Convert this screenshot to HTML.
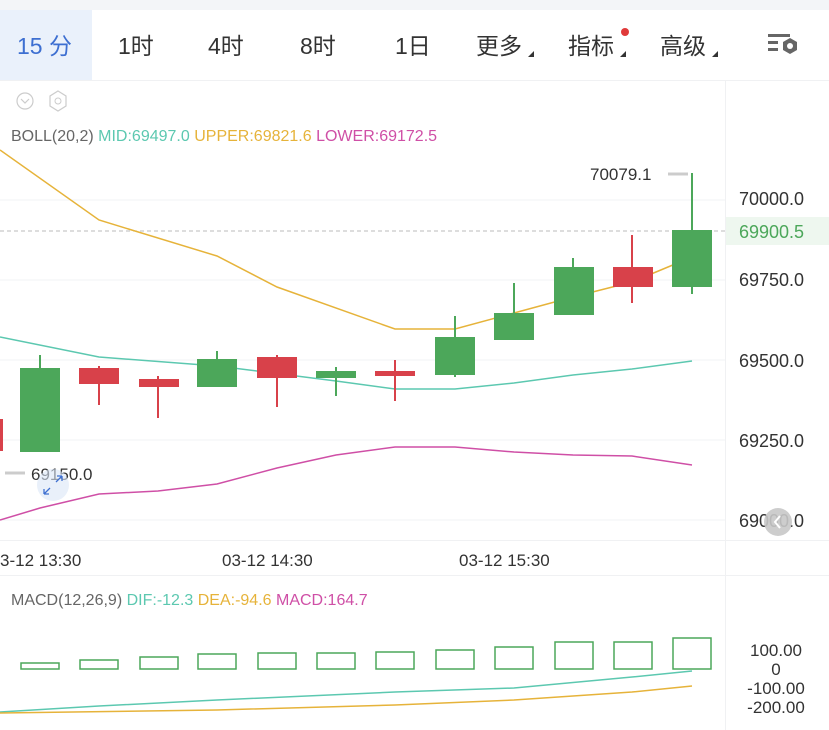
<!DOCTYPE html>
<html><head><meta charset="utf-8"><style>
html,body{margin:0;padding:0;width:829px;height:730px;overflow:hidden;background:#fff;font-family:"Liberation Sans","Noto Sans CJK SC",sans-serif}
svg{display:block}
</style></head><body>
<svg width="829" height="730" viewBox="0 0 829 730" xmlns="http://www.w3.org/2000/svg" font-family="Liberation Sans, Noto Sans CJK SC, sans-serif">
<rect x="0" y="0" width="829" height="10" fill="#f3f5f8"/>
<rect x="0" y="10" width="92" height="70" fill="#eaf1fb"/>
<line x1="0" y1="80.5" x2="829" y2="80.5" stroke="#f0f1f3"/>
<g font-size="23" fill="#333">
<text x="17" y="54" fill="#3d6fd1">15 分</text>
<text x="118" y="54">1时</text>
<text x="208" y="54">4时</text>
<text x="300" y="54">8时</text>
<text x="395" y="54">1日</text>
<text x="476" y="54">更多</text>
<text x="568" y="54">指标</text>
<text x="660" y="54">高级</text>
</g>
<g fill="#333"><path d="M528 57 L534 57 L534 51 Z"/><path d="M620 57 L626 57 L626 51 Z"/><path d="M712 57 L718 57 L718 51 Z"/></g>
<circle cx="625" cy="32" r="4" fill="#e03a3a"/>
<g fill="#666"><rect x="768" y="34" width="22" height="3"/><rect x="768" y="41" width="10" height="3"/><rect x="768" y="48" width="10" height="3"/>
<path d="M790 38 L797 42 L797 50 L790 54 L783 50 L783 42 Z"/></g><circle cx="790" cy="46" r="3" fill="#fff"/>
<line x1="725.5" y1="80" x2="725.5" y2="730" stroke="#f0f1f3"/>
<circle cx="25" cy="101" r="8" fill="none" stroke="#ccc" stroke-width="1.2"/><path d="M21 99 L25 103 L29 99" fill="none" stroke="#ccc" stroke-width="1.2"/>
<path d="M58 91 L66 96 L66 106 L58 111 L50 106 L50 96 Z" fill="none" stroke="#ccc" stroke-width="1.2"/><circle cx="58" cy="101" r="3" fill="none" stroke="#ccc"/>
<text x="11" y="141" font-size="16" fill="#666">BOLL(20,2) <tspan fill="#5cc8b0">MID:69497.0</tspan> <tspan fill="#e6b33a">UPPER:69821.6</tspan> <tspan fill="#cf4fa6">LOWER:69172.5</tspan></text>
<g stroke="#f2f3f5"><line x1="0" y1="200" x2="725" y2="200"/><line x1="0" y1="280" x2="725" y2="280"/><line x1="0" y1="360" x2="725" y2="360"/><line x1="0" y1="440" x2="725" y2="440"/><line x1="0" y1="520" x2="725" y2="520"/></g>
<line x1="0" y1="540.5" x2="829" y2="540.5" stroke="#f0f1f3"/>
<line x1="0" y1="575.5" x2="829" y2="575.5" stroke="#f0f1f3"/>
<line x1="0" y1="231" x2="725" y2="231" stroke="#bbb" stroke-dasharray="4 3"/>
<rect x="726" y="217" width="103" height="28" fill="#eef7ef"/>
<g font-size="18" fill="#333">
<text x="739" y="205">70000.0</text>
<text x="739" y="238" fill="#4ca75a">69900.5</text>
<text x="739" y="286">69750.0</text>
<text x="739" y="367">69500.0</text>
<text x="739" y="447">69250.0</text>
<text x="739" y="527">69000.0</text>
</g>
<circle cx="778" cy="522" r="14" fill="#c8c8c8" opacity="0.9"/><path d="M780 516 L775 522 L780 528" fill="none" stroke="#fff" stroke-width="2"/>
<g stroke-width="1.5" fill="none">
<polyline stroke="#e6b33a" points="0,150 99,220 217,256 277,287 395,329 455,329 514,313 573,297 632,282 692,257"/>
<polyline stroke="#5cc8b0" points="0,337 99,357 217,366 336,381 395,389 455,389 514,383 573,375 632,369 692,361"/>
<polyline stroke="#cf4fa6" points="0,520 40,508 99,494 158,491 217,484 277,468 336,455 395,447 455,447 514,452 573,455 632,456 692,465"/>
</g>
<g stroke-width="2">
<g stroke="#4ca75a" fill="#4ca75a">
<line x1="40" y1="355" x2="40" y2="451"/><rect x="21" y="369" width="38" height="82"/>
<line x1="217" y1="351" x2="217" y2="386"/><rect x="198" y="360" width="38" height="26"/>
<line x1="336" y1="367" x2="336" y2="396"/><rect x="317" y="372" width="38" height="5"/>
<line x1="455" y1="316" x2="455" y2="377"/><rect x="436" y="338" width="38" height="36"/>
<line x1="514" y1="283" x2="514" y2="340"/><rect x="495" y="314" width="38" height="25"/>
<line x1="573" y1="258" x2="573" y2="314"/><rect x="555" y="268" width="38" height="46"/>
<line x1="692" y1="173" x2="692" y2="294"/><rect x="673" y="231" width="38" height="55"/>
</g>
<g stroke="#d8414a" fill="#d8414a">
<rect x="0" y="420" width="2" height="30"/>
<line x1="99" y1="366" x2="99" y2="405"/><rect x="80" y="369" width="38" height="14"/>
<line x1="158" y1="376" x2="158" y2="418"/><rect x="140" y="380" width="38" height="6"/>
<line x1="277" y1="355" x2="277" y2="407"/><rect x="258" y="358" width="38" height="19"/>
<line x1="395" y1="360" x2="395" y2="401"/><rect x="376" y="372" width="38" height="3"/>
<line x1="632" y1="235" x2="632" y2="303"/><rect x="614" y="268" width="38" height="18"/>
</g></g>
<line x1="668" y1="174" x2="688" y2="174" stroke="#ccc" stroke-width="3"/>
<text x="590" y="180" font-size="17" fill="#333">70079.1</text>
<line x1="5" y1="473" x2="25" y2="473" stroke="#ccc" stroke-width="3"/>
<text x="31" y="480" font-size="17" fill="#333">69150.0</text>
<circle cx="53" cy="485" r="16" fill="#dbe6f7" opacity="0.6"/>
<path d="M44 494 L50 488 M44 494 L44 489 M44 494 L49 494 M62 476 L56 482 M62 476 L62 481 M62 476 L57 476" stroke="#3d6fd1" stroke-width="1.3" fill="none"/>
<g font-size="17" fill="#333"><text x="0" y="566">3-12 13:30</text><text x="222" y="566">03-12 14:30</text><text x="459" y="566">03-12 15:30</text></g>
<text x="11" y="605" font-size="16" fill="#666">MACD(12,26,9) <tspan fill="#5cc8b0">DIF:-12.3</tspan> <tspan fill="#e6b33a">DEA:-94.6</tspan> <tspan fill="#cf4fa6">MACD:164.7</tspan></text>
<g fill="none" stroke="#4ca75a" stroke-width="1.5">
<rect x="21" y="663" width="38" height="6"/><rect x="80" y="660" width="38" height="9"/><rect x="140" y="657" width="38" height="12"/>
<rect x="198" y="654" width="38" height="15"/><rect x="258" y="653" width="38" height="16"/><rect x="317" y="653" width="38" height="16"/>
<rect x="376" y="652" width="38" height="17"/><rect x="436" y="650" width="38" height="19"/><rect x="495" y="647" width="38" height="22"/>
<rect x="555" y="642" width="38" height="27"/><rect x="614" y="642" width="38" height="27"/><rect x="673" y="638" width="38" height="31"/>
</g>
<polyline fill="none" stroke="#5cc8b0" stroke-width="1.5" points="0,712 99,706 217,700 395,692 514,688 632,677 692,671"/>
<polyline fill="none" stroke="#e6b33a" stroke-width="1.5" points="0,713 217,710 395,705 514,700 632,692 692,686"/>
<g font-size="17" fill="#333" text-anchor="middle"><text x="776" y="656">100.00</text><text x="776" y="675">0</text><text x="776" y="694">-100.00</text><text x="776" y="713">-200.00</text></g>
</svg>
</body></html>
